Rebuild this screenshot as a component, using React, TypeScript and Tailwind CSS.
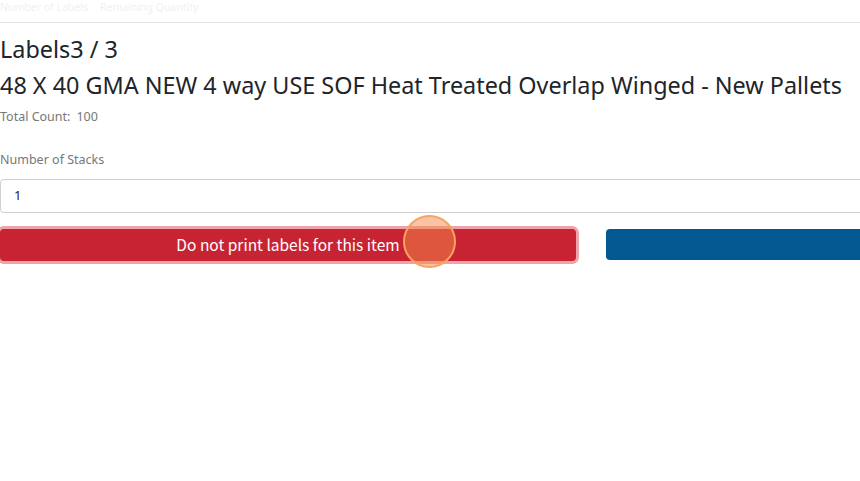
const App = () => {
  return (
    <div
      className="relative h-[481px] w-[860px] overflow-hidden bg-white text-[#212529]"
      style={{ fontFamily: '"Noto Sans", sans-serif' }}
    >
      <div className="flex h-[23px] items-start gap-[12px] border-b border-[#e4e4e4] pt-[1px]">
        <span className="text-[10.5px] leading-[12px] text-[#f1f1f1]">Number of Labels</span>
        <span className="text-[10.5px] leading-[12px] text-[#f1f1f1]">Remaining Quantity</span>
      </div>

      <div className="pt-[11px]">
        <h3 className="text-[23.4px] leading-[30px] font-normal">Labels3 / 3</h3>
        <h3 className="mt-[6px] whitespace-nowrap text-[23.4px] leading-[30px] font-normal">
          48 X 40 GMA NEW 4 way USE SOF Heat Treated Overlap Winged - New Pallets
        </h3>
        <p className="mt-[8px] text-[12.5px] leading-[18px] text-[#777]">
          Total Count:<span className="ml-[6px]">100</span>
        </p>

        <div className="mt-[25px]">
          <label className="block text-[12.5px] leading-[18px] text-[#777]">Number of Stacks</label>
          <div className="mt-[10px] flex h-[34px] w-[880px] items-center rounded-[4px] border border-[#cfcfcf] px-[13px] text-[13px]">
            1
          </div>
        </div>

        <div className="mt-[16px] flex w-[1200px] gap-[30px]">
          <button
            className="flex h-[32px] w-[576px] items-center justify-center rounded-[4px] bg-[#c82333] text-[15.5px] text-white ring-[3px] ring-[#eea2aa]"
            style={{ fontFamily: '"Noto Sans CJK JP", sans-serif' }}
          >
            Do not print labels for this item
          </button>
          <button className="h-[31px] w-[576px] rounded-[4px] bg-[#025891]" />
        </div>
      </div>

      <div className="absolute left-[403px] top-[215px] h-[53px] w-[53px] rounded-full border-2 border-[#f6a463] bg-[#f58a4a]/50" />
    </div>
  );
};

export default App;
